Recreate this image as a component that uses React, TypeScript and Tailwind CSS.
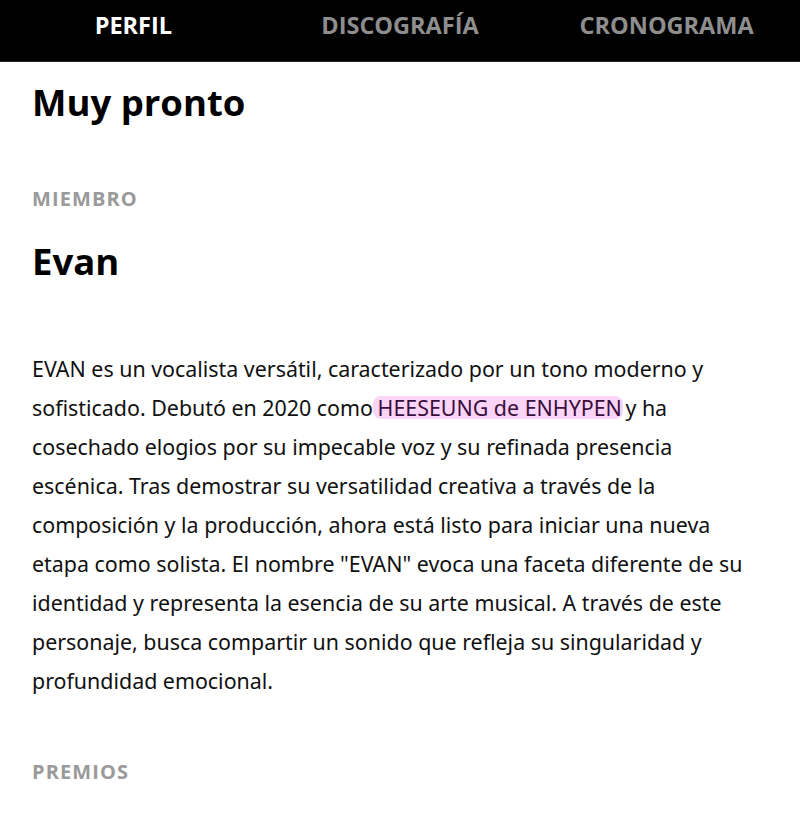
const tabs = [
  { name: "PERFIL", active: true },
  { name: "DISCOGRAFÍA", active: false },
  { name: "CRONOGRAMA", active: false },
]

export default function App() {
  return (
    <div className="min-h-screen bg-white text-black font-['Open_Sans',sans-serif]">
      {/* Tabs */}
      <nav className="grid h-[62px] grid-cols-3 border-b border-[#262626] bg-black pt-[9px]">
        {tabs.map((tab) => (
          <button
            key={tab.name}
            className={`h-8 text-center text-[23.5px] leading-8 font-bold ${
              tab.active ? "text-white" : "text-[#8e8e8e]"
            }`}
          >
            {tab.name}
          </button>
        ))}
      </nav>

      <main className="px-8">
        <h2 className="mt-[16px] text-[36.5px] leading-[48px] font-bold">Muy pronto</h2>

        <section className="mt-[59px]">
          <p className="text-[20px] leading-7 font-bold tracking-[1.1px] text-[#9a9a9a]">MIEMBRO</p>
          <h2 className="mt-[24px] text-[36.5px] leading-[48px] font-bold">Evan</h2>
          <p className="mt-[64px] font-['Noto_Sans',sans-serif] text-[21.4px] leading-[39px] text-[#111]">
            EVAN es un vocalista versátil, caracterizado por un tono moderno y sofisticado. Debutó en 2020 como{" "}
            <span className="-mr-[3px] -ml-[6px] inline-block rounded-lg bg-[#fad5f7] pr-[1px] pl-[5px] leading-[23px] text-[#3a0f3c]">
              HEESEUNG de ENHYPEN
            </span>{" "}
            y ha cosechado elogios por su impecable voz y su refinada presencia escénica. Tras demostrar su
            versatilidad creativa a través de la composición y la producción, ahora está listo para iniciar una
            nueva etapa como solista. El nombre "EVAN" evoca una faceta diferente de su identidad y representa la
            esencia de su arte musical. A través de este personaje, busca compartir un sonido que refleja su
            singularidad y profundidad emocional.
          </p>
        </section>

        <section className="mt-[58px]">
          <p className="text-[20px] leading-7 font-bold tracking-[1.1px] text-[#9a9a9a]">PREMIOS</p>
        </section>
      </main>
    </div>
  )
}
